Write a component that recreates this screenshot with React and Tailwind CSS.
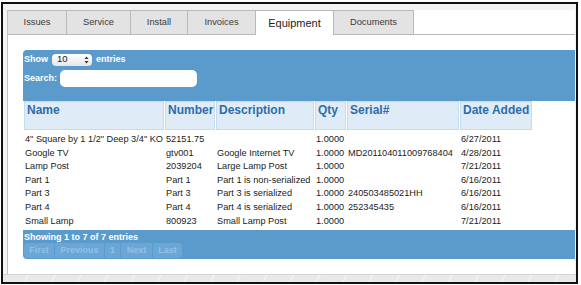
const tabs = [
  { label: "Issues", w: "w-[59px]" },
  { label: "Service", w: "w-[64px]" },
  { label: "Install", w: "w-[57px]" },
  { label: "Invoices", w: "w-[68px]" },
  { label: "Equipment", w: "w-[78px]", active: true },
  { label: "Documents", w: "w-[80px]" },
];

const columns = ["Name", "Number", "Description", "Qty", "Serial#", "Date Added"];

const rows = [
  ['4" Square by 1 1/2" Deep 3/4" KO', "52151.75", "", "1.0000", "", "6/27/2011"],
  ["Google TV", "gtv001", "Google Internet TV", "1.0000", "MD201104011009768404", "4/28/2011"],
  ["Lamp Post", "2039204", "Large Lamp Post", "1.0000", "", "7/21/2011"],
  ["Part 1", "Part 1", "Part 1 is non-serialized", "1.0000", "", "6/16/2011"],
  ["Part 3", "Part 3", "Part 3 is serialized", "1.0000", "240503485021HH", "6/16/2011"],
  ["Part 4", "Part 4", "Part 4 is serialized", "1.0000", "252345435", "6/16/2011"],
  ["Small Lamp", "800923", "Small Lamp Post", "1.0000", "", "7/21/2011"],
];

const pages = [
  { label: "First", w: "w-[31px]" },
  { label: "Previous", w: "w-[50px]" },
  { label: "1", w: "w-[16px]" },
  { label: "Next", w: "w-[32px]" },
  { label: "Last", w: "w-[29px]" },
];

const grid = "grid grid-cols-[140px_50px_98px_31px_112px_72px] gap-x-[1px]";

export default function App() {
  return (
    <div className="w-[581px] h-[285px] bg-white pt-[2px] pl-[1px] font-['Liberation_Sans',Arial,sans-serif]">
      {/* window frame */}
      <div className="w-[577px] h-[282px] border-2 border-[#111] bg-[#f3f3f3] flex flex-col">
        <div className="mt-[6px] ml-[4px] mr-px h-[264px] flex flex-col border-l border-[#c2c2c2] bg-white overflow-hidden">
          {/* Tabs */}
          <div className="flex items-end h-[25px] shrink-0 bg-[#f3f3f3]">
            {tabs.map((t) => (
              <div
                key={t.label}
                className={`${t.w} h-[25px] flex items-center justify-center border-t border-r border-[#b9b9b9] ${
                  t.active
                    ? "bg-white text-[11px] text-[#222]"
                    : "bg-[#e3e3e3] border-b text-[9.3px] text-[#3a3a3a]"
                }`}
              >
                {t.label}
              </div>
            ))}
            <div className="flex-1 h-[25px] border-b border-[#b9b9b9] bg-white" />
          </div>

          {/* Content */}
          <div className="pt-[15px] pl-[15px]">
            {/* top toolbar */}
            <div className="h-[51px] bg-[#5b9bcc] rounded-tl-[4px] pt-[3px] pl-px text-white font-bold text-[9px]">
              <div className="flex items-center h-[13px]">
                <span>Show</span>
                <div className="ml-[4px] w-[40px] h-[12px] rounded-[4px] bg-gradient-to-b from-white to-[#e6e6e6] flex items-center justify-between pl-[5px] pr-[3px] text-[#222] font-normal text-[9.5px]">
                  <span>10</span>
                  <svg width="5" height="8" viewBox="0 0 5 8">
                    <path d="M2.5 0.5 L4.5 3 L0.5 3 Z" fill="#333" />
                    <path d="M2.5 7.5 L4.5 5 L0.5 5 Z" fill="#333" />
                  </svg>
                </div>
                <span className="ml-[4px]">entries</span>
              </div>
              <div className="flex items-center mt-[4px]">
                <span>Search:</span>
                <div className="ml-[3px] w-[137px] h-[17px] rounded-[5px] bg-white" />
              </div>
            </div>

            {/* table */}
            <div className="pl-px">
              <div className={grid}>
                {columns.map((c) => (
                  <div
                    key={c}
                    className="h-[29px] bg-[#dfecf8] border border-[#c5dcf0] pl-[2px] pt-px leading-[14px] text-[12px] font-bold text-[#2d6ca8] whitespace-nowrap"
                  >
                    {c}
                  </div>
                ))}
              </div>
              <div className="mt-[3px]">
                {rows.map((r, i) => (
                  <div key={i} className={`${grid} h-[13.6px] leading-[13.6px] text-[9.2px] text-[#222]`}>
                    {r.map((cell, j) => (
                      <div key={j} className="px-px whitespace-nowrap">
                        {cell}
                      </div>
                    ))}
                  </div>
                ))}
              </div>
            </div>

            {/* bottom toolbar */}
            <div className="mt-[2px] h-[29px] bg-[#5b9bcc] rounded-bl-[4px] pl-px pt-[2px] text-[9px] font-bold">
              <div className="leading-[11px] text-white">Showing 1 to 7 of 7 entries</div>
              <div className="flex h-[15px] w-fit rounded-[4px] overflow-hidden bg-[#6aa7d7]">
                {pages.map((p, i) => (
                  <div
                    key={p.label}
                    className={`${p.w} h-full flex items-center justify-center text-[#93c0e6] ${
                      i < pages.length - 1 ? "border-r border-[#5c9acb]" : ""
                    }`}
                  >
                    {p.label}
                  </div>
                ))}
              </div>
            </div>
          </div>
        </div>
        {/* bottom strip */}
        <div className="flex-1 border-t border-[#d4d4d4] bg-[repeating-linear-gradient(115deg,#e9e9e9_0px,#e9e9e9_22px,#f6f6f6_23px,#e9e9e9_24px)]" />
      </div>
    </div>
  );
}
